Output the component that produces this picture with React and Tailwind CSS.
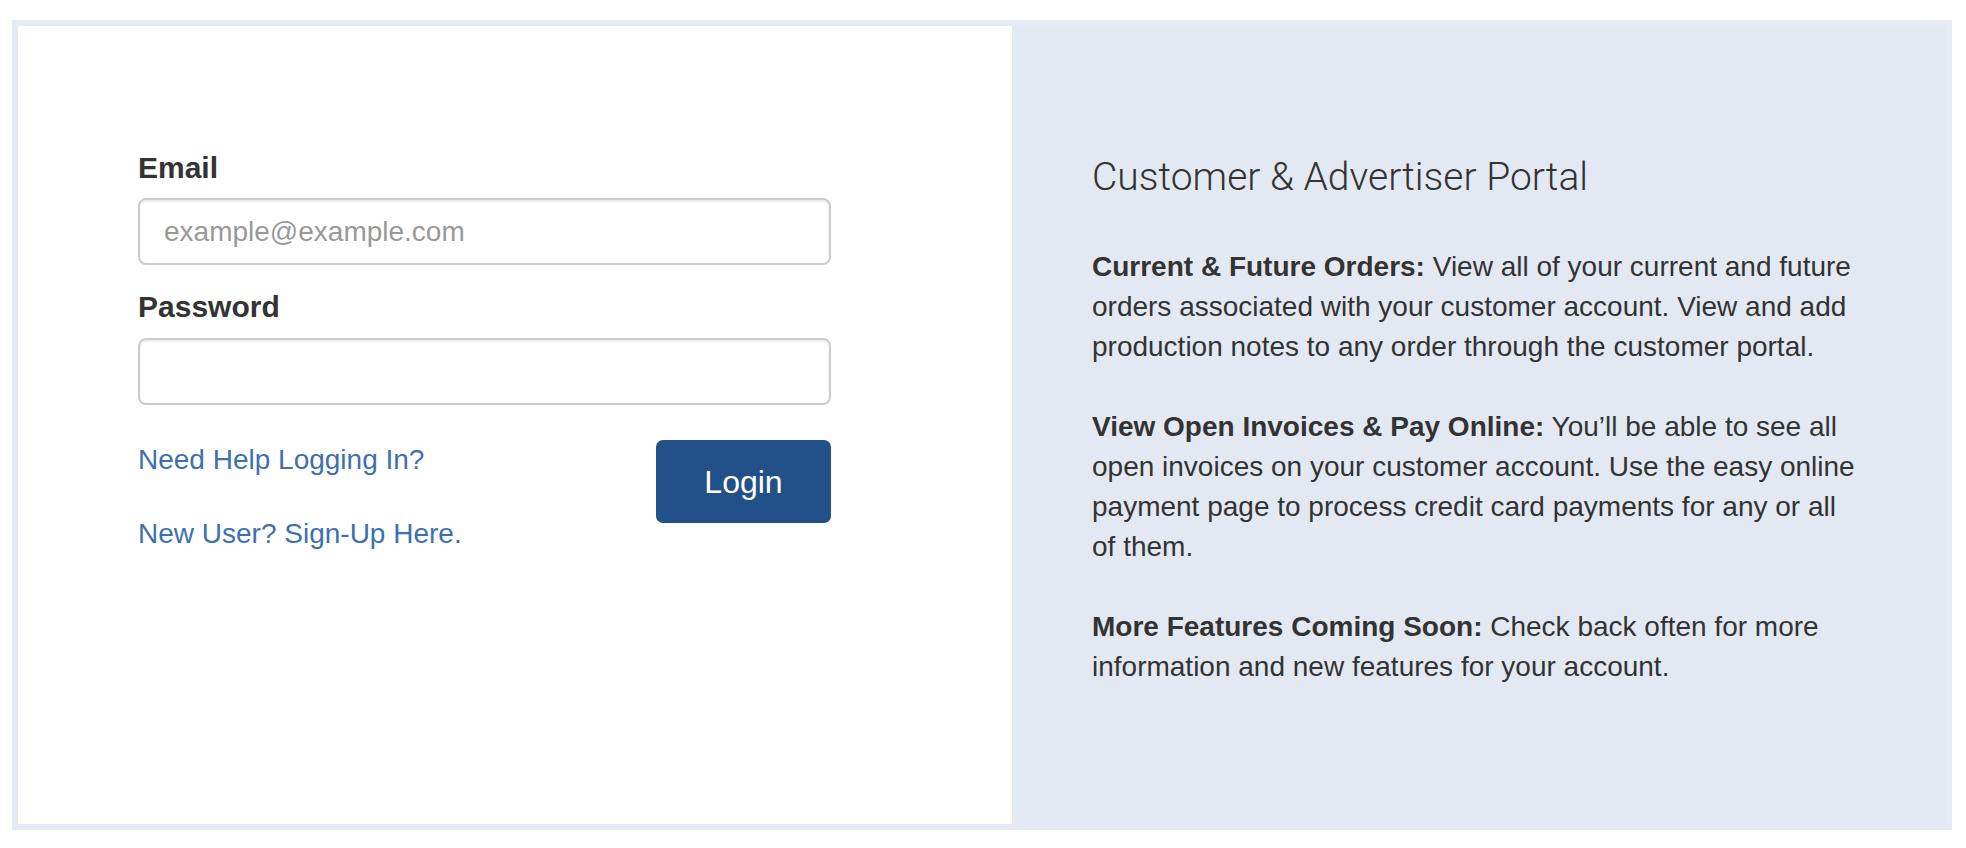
import React from 'react'

const features = [
  {
    title: 'Current & Future Orders:',
    text: 'View all of your current and future orders associated with your customer account. View and add production notes to any order through the customer portal.',
  },
  {
    title: 'View Open Invoices & Pay Online:',
    text: 'You\u2019ll be able to see all open invoices on your customer account. Use the easy online payment page to process credit card payments for any or all of them.',
  },
  {
    title: 'More Features Coming Soon:',
    text: 'Check back often for more information and new features for your account.',
  },
]

const App = () => {
  return (
    <div className="bg-white pt-[20px] pl-[12px] pr-[14px] pb-[18px] font-['Liberation_Sans',Arial,sans-serif] text-[#333]">
      <div className="flex w-[1940px] h-[810px] border-[6px] border-[#e6eaf5]">
        {/* login form */}
        <div className="w-[994px] bg-white pl-[120px] pt-[122px]">
          <form className="w-[693px]" onSubmit={(e) => e.preventDefault()}>
            <label className="block text-[30px] leading-[40px] font-bold mb-[10px]">Email</label>
            <input
              type="email"
              placeholder="example@example.com"
              className="block w-full h-[67px] px-[24px] text-[28px] border-2 border-[#ccc] rounded-[8px] shadow-[inset_0_2px_2px_rgba(0,0,0,0.075)] placeholder:text-[#999] outline-none"
            />
            <label className="block text-[30px] leading-[40px] font-bold mt-[22px] mb-[11px]">Password</label>
            <input
              type="password"
              className="block w-full h-[67px] px-[24px] text-[28px] border-2 border-[#ccc] rounded-[8px] shadow-[inset_0_2px_2px_rgba(0,0,0,0.075)] outline-none"
            />
            <div className="flex justify-between items-start mt-[35px]">
              <div className="flex flex-col gap-[34px] text-[28px] leading-[40px] text-[#3d70b2]">
                <a href="#">Need Help Logging In?</a>
                <a href="#">New User? Sign-Up Here.</a>
              </div>
              <button
                type="submit"
                className="w-[175px] h-[83px] bg-[#225189] text-white text-[32px] rounded-[7px]"
              >
                Login
              </button>
            </div>
          </form>
        </div>

        {/* portal info */}
        <div className="flex-1 bg-[#e3e9f3] pl-[80px] pt-[129px]">
          <h3 className="font-['Roboto',sans-serif] font-light text-[39px] leading-[44px] text-[#333] mb-[48px]">
            Customer &amp; Advertiser Portal
          </h3>
          <div className="w-[773px] text-[28px] leading-[40px]">
            {features.map((f, i) => (
              <p key={i} className="mb-[40px]">
                <b>{f.title}</b> {f.text}
              </p>
            ))}
          </div>
        </div>
      </div>
    </div>
  )
}

export default App
